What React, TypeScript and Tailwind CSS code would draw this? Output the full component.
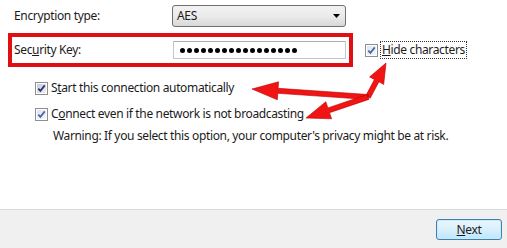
import React from "react";

type Pt = [number, number];

// arrow polygon: shaft from `from` to `tip`, with a triangular head
function arrowPoints(from: Pt, tip: Pt, shaft = 2.5, headLen = 22, headHalf = 9): string {
  const dx = tip[0] - from[0];
  const dy = tip[1] - from[1];
  const len = Math.hypot(dx, dy);
  const ux = dx / len;
  const uy = dy / len;
  const nx = -uy;
  const ny = ux;
  const bx = tip[0] - ux * headLen;
  const by = tip[1] - uy * headLen;
  const pts: Pt[] = [
    [from[0] + nx * shaft, from[1] + ny * shaft],
    [bx + nx * shaft, by + ny * shaft],
    [bx + nx * headHalf, by + ny * headHalf],
    tip,
    [bx - nx * headHalf, by - ny * headHalf],
    [bx - nx * shaft, by - ny * shaft],
    [from[0] - nx * shaft, from[1] - ny * shaft],
  ];
  return pts.map((p) => `${p[0].toFixed(1)},${p[1].toFixed(1)}`).join(" ");
}

function CheckBox({ light = false }: { light?: boolean }) {
  return (
    <span className="relative inline-flex h-[13px] w-[13px] shrink-0 items-center justify-center border border-[#8f8f8f] bg-white">
      <span
        className={`flex h-[9px] w-[9px] items-center justify-center ${
          light ? "bg-gradient-to-br from-[#dfe6f1] to-[#f4f6fa]" : "bg-gradient-to-br from-[#c9ccd2] to-[#f1f1f2]"
        }`}
      >
        <svg width="9" height="9" viewBox="0 0 9 9">
          <path
            d="M1.3 4.6 L3.4 6.9 L7.8 1.4"
            fill="none"
            stroke={light ? "#4d64a6" : "#23357a"}
            strokeWidth="1.7"
            strokeLinejoin="miter"
          />
        </svg>
      </span>
    </span>
  );
}

export default function App() {
  const J: Pt = [368, 97];
  return (
    <div
      className="relative flex h-[248px] w-[507px] flex-col overflow-hidden bg-white text-[12px] tracking-[-0.35px] text-[#1b1b1b]"
      style={{ fontFamily: '"Noto Sans", "Open Sans", sans-serif' }}
    >
      <div className="flex-1">
        {/* Encryption type */}
        <div className="mt-[5px] flex h-[22px] items-center">
          <span className="w-[172px] pl-[14px]">Encryption type:</span>
          <div className="flex h-[22px] w-[174px] items-center justify-between rounded-[3px] border border-[#707070] bg-gradient-to-b from-[#f2f2f2] via-[#ebebeb] to-[#d8d8d8] pl-[4px] pr-[5px]">
            <span>AES</span>
            <svg width="7" height="4" viewBox="0 0 7 4">
              <path d="M0 0 H7 L3.5 4 Z" fill="#000" />
            </svg>
          </div>
        </div>

        {/* Security key row */}
        <div className="mt-[6px] flex items-center">
          <div className="ml-[8px] flex h-[34px] w-[345px] items-center border-[4px] border-[#e00f14]">
            <span className="w-[161px] pl-[2px]">
              Sec<span className="underline">u</span>rity Key:
            </span>
            <div className="flex h-[18px] w-[173px] items-center gap-[2px] border border-[#c3c6cc] border-t-[#abadb3] bg-white pl-[6px]">
              {Array.from({ length: 17 }).map((_, i) => (
                <span key={i} className="h-[5px] w-[5px] rounded-full bg-black" />
              ))}
            </div>
          </div>
          <div className="ml-[12px] flex items-center gap-[2px]">
            <CheckBox light />
            <span className="border border-dotted border-[#333] px-[1px] leading-[16px]">
              <span className="underline">H</span>ide characters
            </span>
          </div>
        </div>

        {/* Start automatically */}
        <div className="mt-[11px] flex h-[20px] items-center gap-[3px] pl-[35px]">
          <CheckBox />
          <span>
            S<span className="underline">t</span>art this connection automatically
          </span>
        </div>

        {/* Connect even if not broadcasting */}
        <div className="mt-[6px] flex h-[20px] items-center gap-[3px] pl-[35px]">
          <CheckBox light />
          <span>
            C<span className="underline">o</span>nnect even if the network is not broadcasting
          </span>
        </div>
        <div className="mt-[2px] h-[20px] pl-[53px] leading-[20px]">
          Warning: If you select this option, your computer's privacy might be at risk.
        </div>
      </div>

      {/* Footer */}
      <div className="flex h-[39px] justify-end border-t border-[#dcdcdc] bg-[#f0f0f0] pr-[5px] pt-[9px]">
        <button className="flex h-[21px] w-[66px] items-center justify-center rounded-[3px] border border-[#3c7fb1] bg-gradient-to-b from-[#eaf6fd] via-[#d9f0fc] to-[#bee6fd] text-[12px] text-[#1b1b1b] shadow-[inset_0_0_0_1px_#c9ecfd]">
          <span>
            <span className="underline">N</span>ext
          </span>
        </button>
      </div>

      {/* Red annotation arrows */}
      <svg className="pointer-events-none absolute left-0 top-0" width="507" height="248">
        <g fill="#f01414" stroke="#b80000" strokeWidth="0.6" strokeLinejoin="round">
          <polygon points={arrowPoints(J, [386, 63], 2.5, 20, 8)} />
          <polygon points={arrowPoints(J, [252, 89], 2.5, 26, 9)} />
          <polygon points={arrowPoints(J, [306, 118], 2.5, 24, 9)} />
        </g>
      </svg>
    </div>
  );
}
